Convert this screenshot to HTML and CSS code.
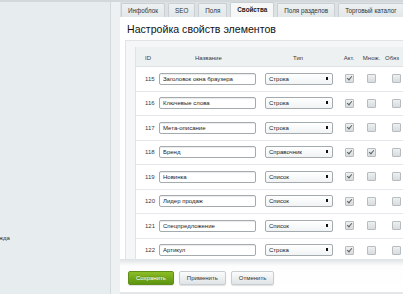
FILE: index.html
```html
<!DOCTYPE html>
<html>
<head>
<meta charset="utf-8">
<link rel="stylesheet" href="styles.css">
</head>
<body>
<div class="page">
  <aside class="sidebar">
    <div class="side-item">жда</div>
  </aside>
  <div class="gutter"></div>
  <main class="main">
    <nav class="tabs">
      <span class="tab">Инфоблок</span>
      <span class="tab">SEO</span>
      <span class="tab">Поля</span>
      <span class="tab active">Свойства</span>
      <span class="tab">Поля разделов</span>
      <span class="tab">Торговый каталог</span>
    </nav>
    <section class="panel">
      <h1 class="title">Настройка свойств элементов</h1>
      <div class="outer">
        <div class="tablebox">
          <div class="row head">
            <div class="c-id">ID</div>
            <div class="c-name">Название</div>
            <div class="c-type">Тип</div>
            <div class="c-chk c1">Акт.</div>
            <div class="c-chk c2">Множ.</div>
            <div class="c-chk c3">Обяз</div>
          </div>
          <div class="row"><div class="c-id">115</div><div class="c-name"><span class="inp">Заголовок окна браузера</span></div><div class="c-type"><span class="sel">Строка</span></div><div class="c-chk c1"><span class="cb on"></span></div><div class="c-chk c2"><span class="cb"></span></div><div class="c-chk c3"><span class="cb"></span></div></div>
          <div class="row"><div class="c-id">116</div><div class="c-name"><span class="inp">Ключевые слова</span></div><div class="c-type"><span class="sel">Строка</span></div><div class="c-chk c1"><span class="cb on"></span></div><div class="c-chk c2"><span class="cb"></span></div><div class="c-chk c3"><span class="cb"></span></div></div>
          <div class="row"><div class="c-id">117</div><div class="c-name"><span class="inp">Мета-описание</span></div><div class="c-type"><span class="sel">Строка</span></div><div class="c-chk c1"><span class="cb on"></span></div><div class="c-chk c2"><span class="cb"></span></div><div class="c-chk c3"><span class="cb"></span></div></div>
          <div class="row"><div class="c-id">118</div><div class="c-name"><span class="inp">Бренд</span></div><div class="c-type"><span class="sel">Справочник</span></div><div class="c-chk c1"><span class="cb on"></span></div><div class="c-chk c2"><span class="cb on"></span></div><div class="c-chk c3"><span class="cb"></span></div></div>
          <div class="row"><div class="c-id">119</div><div class="c-name"><span class="inp">Новинка</span></div><div class="c-type"><span class="sel">Список</span></div><div class="c-chk c1"><span class="cb on"></span></div><div class="c-chk c2"><span class="cb"></span></div><div class="c-chk c3"><span class="cb"></span></div></div>
          <div class="row"><div class="c-id">120</div><div class="c-name"><span class="inp">Лидер продаж</span></div><div class="c-type"><span class="sel">Список</span></div><div class="c-chk c1"><span class="cb on"></span></div><div class="c-chk c2"><span class="cb"></span></div><div class="c-chk c3"><span class="cb"></span></div></div>
          <div class="row"><div class="c-id">121</div><div class="c-name"><span class="inp">Спецпредложение</span></div><div class="c-type"><span class="sel">Список</span></div><div class="c-chk c1"><span class="cb on"></span></div><div class="c-chk c2"><span class="cb"></span></div><div class="c-chk c3"><span class="cb"></span></div></div>
          <div class="row"><div class="c-id">122</div><div class="c-name"><span class="inp">Артикул</span></div><div class="c-type"><span class="sel">Строка</span></div><div class="c-chk c1"><span class="cb on"></span></div><div class="c-chk c2"><span class="cb"></span></div><div class="c-chk c3"><span class="cb"></span></div></div>
        </div>
      </div>
    </section>
    <footer class="actions">
      <span class="btn green">Сохранить</span>
      <span class="btn">Применить</span>
      <span class="btn">Отменить</span>
    </footer>
  </main>
</div>
</body>
</html>
```
FILE: styles.css
```css
html, body { margin: 0; padding: 0; }
body {
  width: 403px; height: 294px; overflow: hidden;
  font-family: "Liberation Sans", Arial, sans-serif;
  background: #e7edef;
}
.page { display: flex; height: 294px; border-top: 2px solid #d3d8db; box-sizing: border-box; }
.sidebar {
  width: 111px; flex: none; background: #e7edef;
  border-right: 1px solid #d3d9dc;
  display: flex; flex-direction: column; justify-content: flex-end;
  padding-bottom: 53px; box-sizing: border-box;
}
.side-item { font-size: 6px; color: #333; margin-left: -1px; white-space: nowrap; }
.gutter { width: 9px; flex: none; background: #edf1f2; }
.main { flex: 1; display: flex; flex-direction: column; min-width: 0; background: #dce2e4; overflow: hidden; }
.tabs { display: flex; height: 15px; gap: 3px; padding-left: 1px; align-items: flex-end; white-space: nowrap; flex: none; }
.tab {
  font-size: 6.3px; color: #333; background: linear-gradient(#eef1f2, #e2e7e9);
  border: 1px solid #c9cfd2; border-bottom: none; border-radius: 2px 2px 0 0;
  height: 14px; line-height: 13px; padding: 0 6px; box-sizing: border-box;
}
.tab.active { background: #f6f8f8; font-weight: bold; color: #222; height: 15px; }
.panel { background: #fff; padding: 6px 0 0 5px; height: 242px; box-sizing: border-box; overflow: hidden; flex: none; }
.title { margin: 0 0 5px 2px; font-size: 10.6px; line-height: 12px; font-weight: normal; color: #111; }
.outer { border: 1px solid #e0e4e6; border-right: none; background: #f4f6f7; padding: 6px 0 0 9px; }
.tablebox { border-left: 1px solid #dfe3e5; background: #fff; }
.row {
  display: flex; align-items: center; height: 24.5px;
  border-bottom: 1px solid #e6e9eb; box-sizing: border-box;
  font-size: 6px; color: #3a3a3a;
}
.row.head { background: #eef1f2; height: 20px; border-bottom: 1px solid #dfe3e5; padding-top: 2px; }
.c-id { width: 23px; padding-left: 9px; box-sizing: border-box; flex: none; }
.head .c-id { padding-left: 9px; }
.c-name { width: 106px; flex: none; box-sizing: border-box; }
.head .c-name { padding-left: 36px; }
.c-type { width: 73px; flex: none; box-sizing: border-box; }
.head .c-type { padding-left: 28px; }
.c-chk { flex: none; text-align: center; }
.c1 { width: 22px; }
.c2 { width: 23px; }
.c3 { width: 26px; }
.head .c3 { text-align: left; padding-left: 2px; }
.inp {
  display: block; width: 97px; height: 12px; line-height: 10px;
  border: 1px solid #a3abaf; border-radius: 2px; box-sizing: border-box;
  padding-left: 3px; background: #fff; color: #222;
  box-shadow: inset 0 1px 1px rgba(0,0,0,0.08);
}
.sel {
  display: block; width: 68px; height: 12px; line-height: 10px; position: relative;
  border: 1px solid #a3abaf; border-radius: 2px; box-sizing: border-box;
  padding-left: 3px; background: linear-gradient(#fff, #f1f3f4); color: #222;
}
.sel::after {
  content: ""; position: absolute; right: 4px; top: 3px;
  width: 2px; height: 3px; background: #111;
}
.cb {
  display: inline-block; width: 7px; height: 7px; border: 1px solid #b6bcbf; border-radius: 1px;
  background: linear-gradient(#eef0f1, #d8dcde); vertical-align: middle; position: relative;
}
.cb.on::after {
  content: ""; position: absolute; left: 2px; top: 0px; width: 2px; height: 4px;
  border: solid #5a6064; border-width: 0 1px 1px 0; transform: rotate(40deg);
}
.actions {
  flex: 1; background: linear-gradient(#dde2e4, #fdfdfd 7px, #fff);
  border-bottom: 2px solid #e3e7e9;
  display: flex; align-items: center; gap: 5px; padding: 5px 0 0 8px;
}
.btn {
  font-size: 6px; color: #333; height: 12px; line-height: 12px; padding: 0 7px;
  background: linear-gradient(#fbfcfc, #e0e4e6); border: 1px solid #c7cdd0; border-radius: 2px;
  box-shadow: 0 1px 1px rgba(0,0,0,0.12);
}
.btn.green {
  background: linear-gradient(#8bbd24, #5d9410); color: #fff; border-color: #5f8f19;
  text-shadow: 0 -1px 0 rgba(0,0,0,0.2);
}
```
